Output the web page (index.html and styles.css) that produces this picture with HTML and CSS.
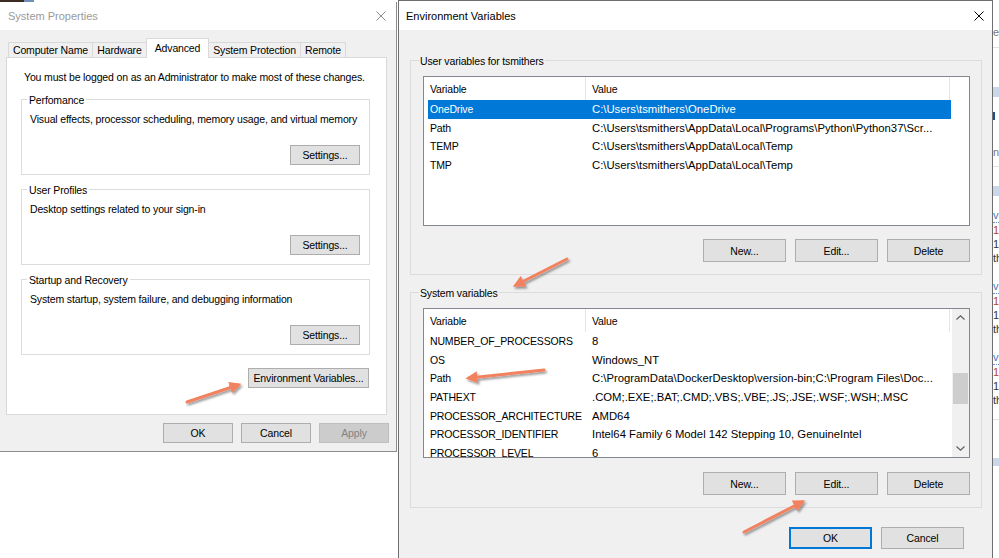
FILE: index.html
```html
<!DOCTYPE html>
<html lang="en">
<head>
  <meta charset="UTF-8" />
  <meta name="viewport" content="width=device-width, initial-scale=1.0"/>
  <title>System Properties - Environment Variables</title>
  <link rel="stylesheet" href="styles.css">
</head>
<body>
  <div class="desktop">
    <div class="taskbit"></div>

    <!-- System Properties (inactive, behind) -->
    <section class="win sysprops">
      <header class="titlebar">
        <span class="title">System Properties</span>
        <svg class="close" width="10" height="10" viewBox="0 0 10 10"><path d="M0.5 0.5L9.5 9.5M9.5 0.5L0.5 9.5"/></svg>
      </header>
      <div class="win-body">
        <div class="tabs">
          <div class="tab tab-computer">Computer Name</div>
          <div class="tab tab-hardware">Hardware</div>
          <div class="tab tab-advanced active">Advanced</div>
          <div class="tab tab-protection">System Protection</div>
          <div class="tab tab-remote">Remote</div>
        </div>
        <div class="tab-panel">
          <p class="note">You must be logged on as an Administrator to make most of these changes.</p>

          <div class="group">
            <div class="group-title">Perfomance</div>
            <p class="group-desc">Visual effects, processor scheduling, memory usage, and virtual memory</p>
            <div class="group-actions"><button class="btn">Settings...</button></div>
          </div>

          <div class="group">
            <div class="group-title">User Profiles</div>
            <p class="group-desc">Desktop settings related to your sign-in</p>
            <div class="group-actions"><button class="btn">Settings...</button></div>
          </div>

          <div class="group">
            <div class="group-title">Startup and Recovery</div>
            <p class="group-desc">System startup, system failure, and debugging information</p>
            <div class="group-actions"><button class="btn">Settings...</button></div>
          </div>

          <div class="env-row"><button class="btn btn-env">Environment Variables...</button></div>
        </div>
        <div class="dialog-buttons">
          <button class="btn">OK</button>
          <button class="btn">Cancel</button>
          <button class="btn" disabled>Apply</button>
        </div>
      </div>
    </section>

    <!-- Environment Variables (active) -->
    <section class="win envvars">
      <header class="titlebar">
        <span class="title">Environment Variables</span>
        <svg class="close" width="10" height="10" viewBox="0 0 10 10"><path d="M0.5 0.5L9.5 9.5M9.5 0.5L0.5 9.5"/></svg>
      </header>
      <div class="win-body">
        <div class="env-group">
          <div class="env-group-title">User variables for tsmithers</div>
          <div class="listview">
            <div class="lv-main">
              <div class="lv-head">
                <div class="lv-col-var">Variable</div>
                <div class="lv-col-val">Value</div>
              </div>
              <div class="lv-row selected"><div class="lv-var">OneDrive</div><div class="lv-val">C:\Users\tsmithers\OneDrive</div></div>
              <div class="lv-row"><div class="lv-var">Path</div><div class="lv-val">C:\Users\tsmithers\AppData\Local\Programs\Python\Python37\Scr...</div></div>
              <div class="lv-row"><div class="lv-var">TEMP</div><div class="lv-val">C:\Users\tsmithers\AppData\Local\Temp</div></div>
              <div class="lv-row"><div class="lv-var">TMP</div><div class="lv-val">C:\Users\tsmithers\AppData\Local\Temp</div></div>
            </div>
          </div>
          <div class="env-actions">
            <button class="btn">New...</button>
            <button class="btn">Edit...</button>
            <button class="btn">Delete</button>
          </div>
        </div>

        <div class="env-group">
          <div class="env-group-title">System variables</div>
          <div class="listview">
            <div class="lv-main">
              <div class="lv-head">
                <div class="lv-col-var">Variable</div>
                <div class="lv-col-val">Value</div>
              </div>
              <div class="lv-row"><div class="lv-var">NUMBER_OF_PROCESSORS</div><div class="lv-val">8</div></div>
              <div class="lv-row"><div class="lv-var">OS</div><div class="lv-val">Windows_NT</div></div>
              <div class="lv-row"><div class="lv-var">Path</div><div class="lv-val">C:\ProgramData\DockerDesktop\version-bin;C:\Program Files\Doc...</div></div>
              <div class="lv-row"><div class="lv-var">PATHEXT</div><div class="lv-val">.COM;.EXE;.BAT;.CMD;.VBS;.VBE;.JS;.JSE;.WSF;.WSH;.MSC</div></div>
              <div class="lv-row"><div class="lv-var">PROCESSOR_ARCHITECTURE</div><div class="lv-val">AMD64</div></div>
              <div class="lv-row"><div class="lv-var">PROCESSOR_IDENTIFIER</div><div class="lv-val">Intel64 Family 6 Model 142 Stepping 10, GenuineIntel</div></div>
              <div class="lv-row"><div class="lv-var">PROCESSOR_LEVEL</div><div class="lv-val">6</div></div>
            </div>
            <div class="lv-scroll">
              <div class="sb-btn"><svg width="9" height="5" viewBox="0 0 9 5"><path d="M0.5 4.5L4.5 0.8L8.5 4.5"/></svg></div>
              <div class="sb-track"><div class="sb-thumb"></div></div>
              <div class="sb-btn"><svg width="9" height="5" viewBox="0 0 9 5"><path d="M0.5 0.5L4.5 4.2L8.5 0.5"/></svg></div>
            </div>
          </div>
          <div class="env-actions">
            <button class="btn">New...</button>
            <button class="btn">Edit...</button>
            <button class="btn">Delete</button>
          </div>
        </div>

        <div class="env-footer">
          <button class="btn btn-default">OK</button>
          <button class="btn">Cancel</button>
        </div>
      </div>
    </section>

    <!-- sliver of the app behind, on the right -->
    <div class="behind-app">
      <span class="ba-text ba-gray ba-first">es</span>
      <div class="ba-line"></div>
      <div class="ba-bar"></div>
      <div class="ba-mark"></div>
      <span class="ba-text ba-gray ba-ns">ns</span>
      <div class="ba-line ba-line2"></div>
      <div class="ba-bar ba-bar2"></div>
      <div class="ba-block">
        <span class="ba-text ba-link">ve</span>
        <span class="ba-text ba-num">15</span>
        <span class="ba-text">14</span>
        <span class="ba-text">th</span>
      </div>
      <div class="ba-block">
        <span class="ba-text ba-link">ve</span>
        <span class="ba-text ba-num">15</span>
        <span class="ba-text">14</span>
        <span class="ba-text">th</span>
      </div>
      <div class="ba-block">
        <span class="ba-text ba-link">ve</span>
        <span class="ba-text ba-num">15</span>
        <span class="ba-text">14</span>
        <span class="ba-text">th</span>
      </div>
      <div class="ba-line ba-line3"></div>
      <div class="ba-bar ba-bar3"></div>
    </div>

    <!-- orange callout arrows drawn over the screenshot -->
    <svg class="callouts" width="999" height="558" viewBox="0 0 999 558">
      <defs>
        <filter id="arrowShadow" x="-30%" y="-30%" width="160%" height="160%">
          <feDropShadow dx="1.5" dy="2" stdDeviation="1.2" flood-color="#000" flood-opacity="0.4"/>
        </filter>
        <marker id="arrowHead" viewBox="0 0 10 10" refX="7" refY="5" markerWidth="4" markerHeight="4" orient="auto">
          <path d="M0 0L10 5L0 10z" fill="#f2825f"/>
        </marker>
      </defs>
      <g class="arrow" filter="url(#arrowShadow)">
        <line x1="187" y1="402" x2="238" y2="385" marker-end="url(#arrowHead)"/>
        <line x1="567" y1="259" x2="516" y2="285" marker-end="url(#arrowHead)"/>
        <line x1="544" y1="370" x2="469" y2="378" marker-end="url(#arrowHead)"/>
        <line x1="744" y1="532" x2="802" y2="502" marker-end="url(#arrowHead)"/>
      </g>
    </svg>
  </div>
</body>
</html>
```

FILE: styles.css
```css
/* whole screenshot is one fixed "desktop" */
html, body {
  margin: 0; padding: 0;
  height: 100%;
}
body {
  background: #fff;
  font-family: "Liberation Sans", Arial, sans-serif;
  font-size: 10.5px;
  letter-spacing: -0.15px;
  color: #000;
  overflow: hidden;
}
.desktop {
  position: relative;
  width: 999px;
  height: 558px;
  overflow: hidden;
}
.taskbit {
  position: absolute;
  top: 0; left: 0;
  width: 34px; height: 2px;
  background: linear-gradient(90deg, #3a2a22 0 24px, #6f8fb8 24px 34px);
}

/* generic window chrome */
.win {
  position: absolute;
  box-sizing: border-box;
  display: flex;
  flex-direction: column;
}
.titlebar {
  flex: none;
  display: flex;
  align-items: center;
  justify-content: space-between;
  background: #fff;
}
.title {
  font-size: 11px;
  letter-spacing: 0;
}
.close path {
  fill: none;
  stroke: #000;
  stroke-width: 1;
}
.win-body {
  flex: 1;
  background: #f0f0f0;
  display: flex;
  flex-direction: column;
}
p {
  margin: 0;
}

/* buttons */
.btn {
  box-sizing: border-box;
  width: 70px;
  height: 20px;
  padding: 0;
  font: inherit;
  letter-spacing: inherit;
  color: #000;
  background: #e1e1e1;
  border: 1px solid #adadad;
}
.btn:disabled {
  background: #cccccc;
  border-color: #bfbfbf;
  color: #838383;
}

/* === System Properties === */
.sysprops {
  left: -1px; top: 2px;
  width: 398px; height: 450px;
  border: 1px solid #8c8c8c;
  border-top: none;
}
.sysprops .titlebar {
  height: 28px;
  padding: 0 10px 0 8px;
}
.sysprops .title {
  color: #9a9a9a;
}
.sysprops .close path {
  stroke: #8a8a8a;
}
.sysprops .win-body {
  padding: 8px 9px 0 6px;
}
.tabs {
  display: flex;
  align-items: flex-end;
  height: 20px;
  margin: 0 0 -1px 2px;
  position: relative;
  z-index: 1;
}
.tab {
  box-sizing: border-box;
  height: 15px;
  margin: 0 0 1px -1px;
  border: 1px solid #d9d9d9;
  border-bottom: none;
  background: #f0f0f0;
  text-align: center;
  line-height: 14px;
}
.tab:first-child { margin-left: 0; }
.tab.active {
  height: 20px;
  margin-bottom: 0;
  background: #fff;
  line-height: 18px;
}
.tab-computer { width: 85px; }
.tab-hardware { width: 55px; }
.tab-advanced { width: 63px; }
.tab-protection { width: 93px; }
.tab-remote { width: 46px; }

.tab-panel {
  box-sizing: border-box;
  flex: none;
  height: 358px;
  background: #fff;
  border: 1px solid #d9d9d9;
  padding: 12px 16px 0 14px;
  display: flex;
  flex-direction: column;
}
.note {
  margin-left: 3px;
  line-height: 14px;
}
.group {
  border: 1px solid #dcdcdc;
  padding: 0 9px 9px 8px;
  margin-top: 14px;
}
.note + .group { margin-top: 15px; }
.group-title {
  width: fit-content;
  margin: -7px 0 0 -3px;
  padding: 0 2px;
  background: #fff;
  line-height: 14px;
}
.group-desc {
  margin-top: 5px;
  line-height: 14px;
}
.group-actions {
  display: flex;
  justify-content: flex-end;
  margin-top: 19px;
}
.env-row {
  display: flex;
  justify-content: flex-end;
  margin: 13px 1px 0 0;
}
.btn-env { width: 121px; }
.dialog-buttons {
  display: flex;
  justify-content: flex-end;
  gap: 8px;
  padding-top: 8px;
  margin-right: -2px;
}

/* === Environment Variables === */
.envvars {
  left: 398px; top: 0;
  width: 595px; height: 570px;
  border: 1px solid #6e6e6e;
  border-bottom: none;
}
.envvars .titlebar {
  height: 29px;
  padding: 0 8px 0 7px;
}
.envvars .win-body {
  padding: 30px 10px 0 11px;
}
.env-group {
  border: 1px solid #dcdcdc;
  padding: 0 11px 12px 12px;
}
.env-group + .env-group { margin-top: 17px; }
.env-group-title {
  width: fit-content;
  margin: -7px 0 0 -4px;
  padding: 0 1px;
  background: #f0f0f0;
  line-height: 14px;
}
.env-actions, .env-footer {
  display: flex;
  justify-content: flex-end;
  gap: 9px;
  margin-top: 13px;
}
.env-group + .env-group .env-actions { margin-top: 14px; }
.env-actions .btn, .env-footer .btn {
  width: 83px;
  height: 23px;
}
.env-footer {
  margin: 19px 18px 0 0;
}
.env-footer .btn { height: 22px; }
.btn-default {
  border-color: #0078d7;
  box-shadow: inset 0 0 0 1px #0078d7;
}

/* list views */
.listview {
  box-sizing: border-box;
  height: 150px;
  margin-top: 8px;
  border: 1px solid #828790;
  background: #fff;
  display: flex;
}
.lv-main {
  flex: 1;
  min-width: 0;
  display: flex;
  flex-direction: column;
  overflow: hidden;
}
.lv-head {
  flex: none;
  display: flex;
  height: 23px;
}
.lv-col-var, .lv-col-val {
  box-sizing: border-box;
  display: flex;
  align-items: center;
  padding-left: 6px;
  border-right: 1px solid #e5e5e5;
}
.lv-col-var { width: 162px; }
.lv-col-val { width: 364px; }
.lv-row {
  flex: none;
  display: flex;
  align-items: center;
  height: 18.6px;
  width: 523px;
  margin-left: 4px;
  white-space: nowrap;
}
.lv-row.selected {
  background: #0078d7;
  color: #fff;
}
.lv-var {
  box-sizing: border-box;
  width: 158px;
  padding-left: 2px;
  overflow: hidden;
}
.lv-val {
  flex: 1;
  min-width: 0;
  padding-left: 6px;
  font-size: 11.3px;
  letter-spacing: 0;
  overflow: hidden;
}

/* vertical scrollbar of the system list */
.lv-scroll {
  flex: none;
  width: 17px;
  background: #f0f0f0;
  display: flex;
  flex-direction: column;
}
.sb-btn {
  height: 17px;
  display: flex;
  align-items: center;
  justify-content: center;
}
.sb-btn path {
  fill: none;
  stroke: #606060;
  stroke-width: 1.2;
}
.sb-track {
  flex: 1;
}
.sb-thumb {
  width: 15px;
  height: 31px;
  margin: 47px 0 0 1px;
  background: #cdcdcd;
}

/* app peeking out on the right */
.behind-app {
  position: absolute;
  top: 0; left: 993px;
  width: 6px; height: 558px;
  background: #fff;
  overflow: hidden;
  display: flex;
  flex-direction: column;
}
.ba-text {
  display: block;
  height: 14px;
  line-height: 14px;
  font-size: 11px;
  letter-spacing: 0;
  color: #333;
  white-space: nowrap;
}
.ba-gray { color: #777; }
.ba-first { margin-top: 25px; }
.ba-line {
  height: 1px;
  margin-top: 8px;
  background: #e3e3e3;
}
.ba-bar {
  height: 10px;
  margin-top: 39px;
  background: #c9d7ea;
}
.ba-mark {
  width: 2px; height: 8px;
  margin-top: 15px;
  background: #1f4e8c;
}
.ba-ns { margin-top: 25px; }
.ba-line2 { margin-top: 7px; }
.ba-bar2 { margin-top: 19px; }
.ba-block {
  margin-top: 12px;
  display: flex;
  flex-direction: column;
}
.ba-block + .ba-block { margin-top: 14px; }
.ba-block:nth-of-type(1) { margin-top: 45px; }
.ba-link {
  color: #3d7cc9;
  border-bottom: 1px dotted #6a8fd0;
}
.ba-num { color: #b5451b; }
.ba-line3 { margin-top: 12px; }
.ba-bar3 { margin-top: 38px; height: 8px; }

/* callout arrows */
.callouts {
  position: absolute;
  top: 0; left: 0;
  pointer-events: none;
}
.arrow line {
  stroke: #f2825f;
  stroke-width: 3;
  stroke-linecap: round;
}
```
